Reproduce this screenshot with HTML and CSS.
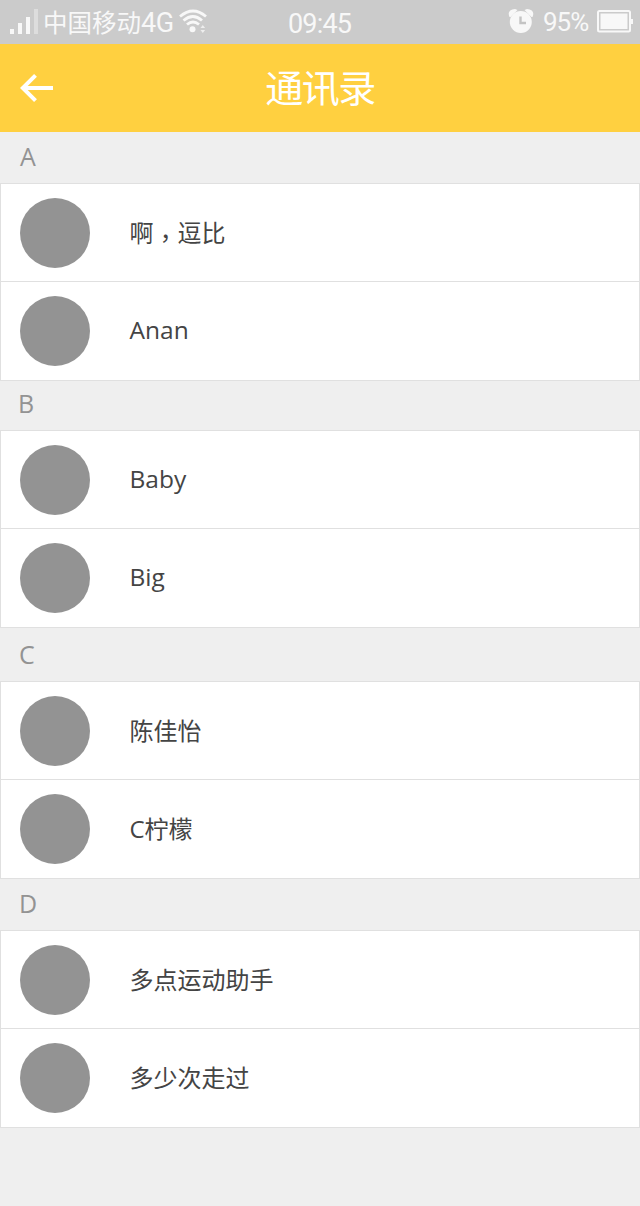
FILE: index.html
```html
<!DOCTYPE html>
<html lang="zh-CN">
<head>
<meta charset="utf-8">
<title>通讯录</title>
<link rel="stylesheet" href="styles.css">
</head>
<body>
<div class="status">
  <svg class="signal" width="30" height="28" viewBox="0 0 30 28" fill="#f8f8f8"><path d="M1 21h4v5H1zM9 15h4v11H9zM17 9h4v17h-4z"/><path d="M25 1h4v25h-4z" opacity=".4"/></svg>
  <span class="carrier">中国移动<span class="network">4G</span></span>
  <svg class="wifi" width="28" height="26" viewBox="0 0 28 26" fill="none" stroke="#f8f8f8" stroke-width="2.8"><path d="M1 8.500Q14 -2.500 27 8.500M4.500 12.500Q14 4.500 23 12.500M8 16.500Q14 11.500 20 16.500"/><circle cx="13.500" cy="21.300" r="3" fill="#f8f8f8" stroke="none"/><path d="M21.500 20l2.300-3 2.300 3zM21.500 22h4.600L23.800 25z" fill="#eee" stroke="none"/></svg>
  <span class="time">09:45</span>
  <svg class="alarm" width="26" height="26" viewBox="0 0 26 26"><path d="M1.500 9Q-1.500 2 7 1L9.500 2 2.500 9zM24.500 9Q27.500 2 19 1L16.500 2l7 7z" fill="#f8f8f8"/><circle cx="12.800" cy="14" r="11" fill="#f8f8f8"/><path d="M12.500 8.500V15H18" fill="none" stroke="#c4c4c4" stroke-width="2.400"/></svg>
  <span class="percent">95%</span>
  <svg class="battery" width="37" height="23" viewBox="0 0 37 23"><rect x="1" y="1" width="32" height="20.500" rx="1.500" fill="none" stroke="#f8f8f8" stroke-width="2"/><rect x="3.500" y="3.500" width="27" height="15.500" fill="#f8f8f8"/><path d="M34 9h2v5h-2z" fill="#f8f8f8"/></svg>
</div>
<header class="navbar">
  <svg class="back" width="34" height="30" viewBox="0 0 34 30" fill="none" stroke="#fff" stroke-width="4"><path d="M2.500 15H33M15.500 2.300L2.800 15l12.700 12.700"/></svg>
  <h1 class="title">通讯录</h1>
</header>
<main>
  <h2 class="letter letter-a">A</h2>
  <ul class="group">
    <li class="contact"><span class="avatar"></span><span class="name">啊<span class="comma" lang="zh-TW">，</span>逗比</span></li>
    <li class="contact"><span class="avatar"></span><span class="name latin">Anan</span></li>
  </ul>
  <h2 class="letter letter-b">B</h2>
  <ul class="group">
    <li class="contact"><span class="avatar"></span><span class="name latin">Baby</span></li>
    <li class="contact"><span class="avatar"></span><span class="name latin">Big</span></li>
  </ul>
  <h2 class="letter letter-c">C</h2>
  <ul class="group">
    <li class="contact"><span class="avatar"></span><span class="name">陈佳怡</span></li>
    <li class="contact"><span class="avatar"></span><span class="name mixed">C柠檬</span></li>
  </ul>
  <h2 class="letter letter-d">D</h2>
  <ul class="group">
    <li class="contact"><span class="avatar"></span><span class="name">多点运动助手</span></li>
    <li class="contact"><span class="avatar"></span><span class="name">多少次走过</span></li>
  </ul>
</main>
</body>
</html>
```
FILE: styles.css
```css
* { box-sizing: border-box; }
body {
  margin: 0;
  min-height: 1206px;
  background: #efefef;
  font-family: "Open Sans", "Noto Sans CJK SC", sans-serif;
  color: #444;
}
svg { display: block; flex: none; }
.status {
  display: flex;
  align-items: flex-start;
  height: 44px;
  background: #cbcbcb;
  color: #f8f8f8;
  white-space: nowrap;
}
.signal { margin: 8px 0 0 9px; }
.carrier {
  width: 133px;
  margin: 4px 0 0 4px;
  font: 24.5px/36px "Noto Sans CJK SC", sans-serif;
}
.network { font: 27px/36px Roboto, sans-serif; letter-spacing: -0.5px; }
.wifi { margin: 8px 0 0 3px; }
.time {
  width: 72px;
  margin: 6px 0 0 81px;
  font: 27px/36px Roboto, sans-serif;
  letter-spacing: -0.8px;
}
.alarm { margin: 8px 0 0 148px; }
.percent {
  width: 54px;
  margin: 4px 0 0 9px;
  font: 26px/36px Roboto, sans-serif;
  letter-spacing: -1px;
}
.battery { margin: 10px 0 0 0; }
.navbar {
  display: grid;
  grid-template-columns: 54px 1fr 54px;
  align-items: center;
  height: 88px;
  background: #ffd040;
  color: #fff;
}
.back { margin-left: 20px; }
.title {
  margin: 0;
  padding-bottom: 4px;
  text-align: center;
  font: 400 38px/56px "Noto Sans CJK SC", sans-serif;
  letter-spacing: -1.5px;
}
.letter {
  margin: 0;
  padding-left: 20px;
  font-weight: 400;
  font-size: 25px;
  color: #939393;
}
.letter-a { height: 51px; line-height: 49px; }
.letter-b { height: 49px; line-height: 45px; padding-left: 18px; }
.letter-c { height: 53px; line-height: 53px; padding-left: 19px; }
.letter-d { height: 51px; line-height: 49px; padding-left: 19px; }
.group {
  margin: 0;
  padding: 0;
  height: 198px;
  list-style: none;
  background: #fff;
  border: 1px solid #e0e0e0;
}
.contact {
  display: flex;
  align-items: center;
  gap: 39px;
  height: 98px;
  padding: 0 19px;
}
.contact:first-child { border-bottom: 1px solid #e0e0e0; }
.avatar {
  width: 70px;
  height: 70px;
  border-radius: 50%;
  background: #939393;
}
.name {
  padding: 0 0 2px 0.5px;
  font: 24px/36px "Noto Sans CJK SC", sans-serif;
}
.comma {
  font-family: "Noto Sans CJK TC", sans-serif;
  line-height: 1;
  vertical-align: -5px;
}
.latin { font: 24.5px/36px "Open Sans", sans-serif; }
.mixed {
  padding-bottom: 1px;
  font-family: "Open Sans", "Noto Sans CJK SC", sans-serif;
}
```
